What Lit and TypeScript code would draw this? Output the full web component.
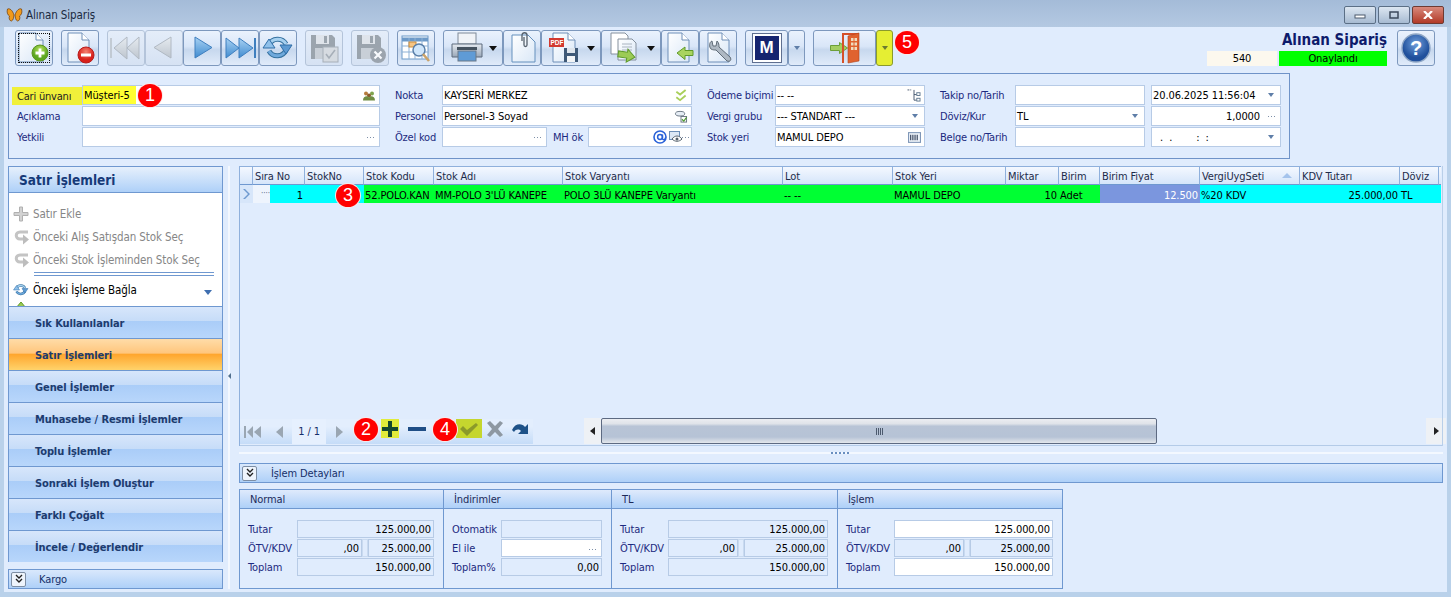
import { LitElement, css, html, svg } from 'lit'
import { customElement } from 'lit/decorators.js'

const page = (x = 1, w = 24) => svg`<path d="M${x} 1h${w - 7}l7 7v22h-${w}z" fill="url(#paper)" stroke="#6f8fb8"/><path d="M${x + w - 7} 1v7h7" fill="#fff" stroke="#6f8fb8"/>`
const floppy = (c1: string, c2: string) => svg`<path d="M3 3h21l3 3v21h-24z" fill="${c1}"/><rect x="8" y="3" width="13" height="9" fill="#dfe3e8"/><rect x="16" y="4" width="3" height="7" fill="${c1}"/><rect x="7" y="16" width="15" height="11" fill="${c2}"/>`
const ring = svg`
  <path d="M7 13A9.500 9.500 0 0 1 24 12" fill="none" stroke="#35719f" stroke-width="5"/><path d="M7 13A9.500 9.500 0 0 1 24 12" fill="none" stroke="#a6d0ef" stroke-width="3"/>
  <path d="M24 18A9.500 9.500 0 0 1 7 19" fill="none" stroke="#35719f" stroke-width="5"/><path d="M24 18A9.500 9.500 0 0 1 7 19" fill="none" stroke="#6fa9dc" stroke-width="3"/>
  <path d="M1 16h12l-6-9z" fill="#8fc0ea" stroke="#2f6ea8"/><path d="M18 13h12l-6 9z" fill="#5d9ad2" stroke="#2f6ea8"/>`
const hook = svg`<path d="M15 3H7C2 3 2 10 7 10h3" fill="none" stroke="#c4c4c4" stroke-width="3"/><path d="M10 5.500l6 5-6 5z" fill="#bdbdbd"/>`

const icons: Record<string, unknown> = {
  add: svg`${page()}<circle cx="22" cy="21" r="8" fill="url(#greenball)" stroke="#5c9420"/><path d="M17.500 21h9M22 16.500v9" stroke="#fff" stroke-width="2.800"/>`,
  del: svg`${page(4, 21)}<circle cx="22" cy="23" r="8" fill="url(#redball)" stroke="#b71c1c"/><rect x="17" y="21.500" width="10" height="3" fill="#fff"/>`,
  first: svg`<path d="M1 6v20" stroke="#bcc4cc" stroke-width="2"/><path d="M17 5v22l-13-11zM29 5v22l-12-11z" fill="url(#grey)" stroke="#a6aeb7"/>`,
  prev: svg`<path d="M23 5v21l-17-10.500z" fill="url(#grey)" stroke="#a6aeb7"/>`,
  next: svg`<path d="M9 5v21l17-10.500z" fill="url(#blue)" stroke="#3f7fbf"/>`,
  last: svg`<path d="M2 6v20l13-10zM15 6v20l14-10z" fill="url(#blue)" stroke="#3f7fbf"/><path d="M31 6v20" stroke="#3f7fbf" stroke-width="2"/>`,
  refresh: ring,
  saveok: svg`${floppy('#8b949c', '#c4cad0')}<rect x="15" y="15" width="15" height="15" fill="#d5d9dd" stroke="#9aa2aa"/><path d="M18 22l3 4 6-8" fill="none" stroke="#9aa2aa" stroke-width="1.600"/>`,
  savex: svg`${floppy('#8b949c', '#c4cad0')}<circle cx="24" cy="23" r="8" fill="#8d959d"/><path d="M20.500 19.500l7 7M27.500 19.500l-7 7" stroke="#fff" stroke-width="2.200"/>`,
  table: svg`<rect x="2" y="4" width="26" height="23" fill="#fff" stroke="#6d9ac8"/><path d="M2 7.500h26" stroke="#6d9ac8" stroke-width="4"/><path d="M2 14h26M2 20h26M9 6v21M15 6v21M22 6v21" stroke="#8db1d6"/><rect x="9" y="10" width="7" height="5" fill="#f6c583" stroke="#c98b3b"/><circle cx="19" cy="18" r="6" fill="#cfe6fb" stroke="#5a7fa8" stroke-width="1.500"/><path d="M23 22l6 7" stroke="#caa36a" stroke-width="2.600"/>`,
  print: svg`<rect x="8" y="1" width="18" height="11" fill="#f0f3f7" stroke="#7e8a98"/><path d="M2 12h30v13h-30z" fill="url(#printer)" stroke="#5c6a7c"/><rect x="7" y="15" width="20" height="3" fill="#45525f"/><rect x="8" y="19" width="18" height="10" fill="#5f9bd6" stroke="#6b7888"/>`,
  clip: svg`<path d="M6 3h16l7 7v20h-23z" fill="url(#paper)" stroke="#6590bd"/><path d="M16 9v-6c0-3 5-3 5 0v10c0 2-3 2-3 0v-8" fill="none" stroke="#55606c" stroke-width="1.300"/>`,
  pdf: svg`${page(5, 22)}<rect x="1" y="6" width="15" height="9" fill="#d2392f"/><text x="2.500" y="13" font-size="6.500" font-weight="700" fill="#fff" font-family="Liberation Sans">PDF</text><path d="M16 16h14v14h-14z" fill="#3e5876"/><rect x="19" y="16" width="8" height="5" fill="#dfe5ec"/><rect x="19" y="24" width="8" height="6" fill="#f2f4f6"/>`,
  copy: svg`<path d="M3 1h14l3 3v18h-17z" fill="#fff" stroke="#85909d"/><path d="M10 7h14l4 4v17h-18z" fill="url(#paper)" stroke="#85909d"/><path d="M14 12h10M14 15h10M14 18h10" stroke="#aab4c0"/><path d="M27 24l-8-7v3h-9v6h9v4z" transform="rotate(8 18 24)" fill="#9ccb55" stroke="#5f9a2a"/>`,
  back: svg`${page(4, 21)}<path d="M13 21l8-6v3.500h8v5h-8v4z" fill="#a9d45f" stroke="#5f9a2a"/>`,
  tool: svg`${page(6, 21)}<path d="M10 9c-3 1-3 6-1 8 2 1 3 1 5 1l11 11c3 1 5-1 3-4l-11-10c0-2 0-4-2-6l-1 5h-3z" fill="#aeb8c3" stroke="#606c78"/>`,
  exit: svg`<path d="M4.500 13.500h9v-3l8 5.500-8 5.500v-3h-9z" fill="#a3ce62" stroke="#6c9f3a"/><path d="M16 1h17v2h-15v28h-2z" fill="#d5512a"/><path d="M22 4l11-3v28l-11 2z" fill="#e0622f" stroke="#b2431b" stroke-width=".6"/><path d="M25 6h2.500v3h-2.500zM28.500 6h2.500v3h-2.500zM25 10.500h2.500v3h-2.500zM28.500 10.500h2.500v3h-2.500zM25 15h2.500v3h-2.500zM28.500 15h2.500v3h-2.500z" fill="#f0dcc0"/>`,
  help: svg`<circle cx="15" cy="15" r="14" fill="url(#helpball)" stroke="#8fa7c6" stroke-width="1.400"/><text x="15" y="22" text-anchor="middle" font-size="20" font-weight="700" fill="#fff" font-family="Liberation Sans">?</text>`,
}

const COLS = [
  ['', 13], ['Sıra No', 52], ['StokNo', 59], ['Stok Kodu', 70], ['Stok Adı', 129], ['Stok Varyantı', 220], ['Lot', 110],
  ['Stok Yeri', 113], ['Miktar', 53], ['Birim', 41], ['Birim Fiyat', 100], ['VergiUygSeti', 100], ['KDV Tutarı', 100], ['Döviz', 39],
] as const

const NAV = ['Sık Kullanılanlar', 'Satır İşlemleri', 'Genel İşlemler', 'Muhasebe / Resmi İşlemler', 'Toplu İşlemler', 'Sonraki İşlem Oluştur', 'Farklı Çoğalt', 'İncele / Değerlendir']

@customElement('app-root')
export class AppRoot extends LitElement {
  private tool(name: string, cls = '') {
    return html`<button class="tb ${cls}"><svg class="ic" viewBox="0 0 32 32">${icons[name]}</svg></button>`
  }

  private toolMenu(name: string) {
    return html`<button class="tb menu w60"><svg class="ic" viewBox="0 0 32 32">${icons[name]}</svg><i class="blk"></i></button>`
  }

  private money(a: string, b: string, c: string, white = false) {
    return html`
      <div class="sum-row"><span>Tutar</span><b class="val ${white ? 'on' : ''}">${a}</b></div>
      <div class="sum-row"><span>ÖTV/KDV</span><div class="split"><b class="val">,00</b><i class="stub"></i><b class="val">${b}</b></div></div>
      <div class="sum-row"><span>Toplam</span><b class="val ${white ? 'on' : ''}">${c}</b></div>
    `
  }

  render() {
    return html`
      <svg class="defs" width="0" height="0"><defs>
        <linearGradient id="paper" x1="0" y1="0" x2="1" y2="1"><stop offset="0" stop-color="#fff"/><stop offset="1" stop-color="#d9e7f7"/></linearGradient>
        <linearGradient id="blue" x1="0" y1="0" x2="0" y2="1"><stop offset="0" stop-color="#a9d2f3"/><stop offset="1" stop-color="#3f8bd0"/></linearGradient>
        <linearGradient id="grey" x1="0" y1="0" x2="0" y2="1"><stop offset="0" stop-color="#e8ecef"/><stop offset="1" stop-color="#b7bec6"/></linearGradient>
        <linearGradient id="printer" x1="0" y1="0" x2="0" y2="1"><stop offset="0" stop-color="#e6ebf1"/><stop offset="1" stop-color="#98a6b7"/></linearGradient>
        <radialGradient id="greenball" cy=".3"><stop offset="0" stop-color="#b7e35f"/><stop offset="1" stop-color="#5ca621"/></radialGradient>
        <radialGradient id="redball" cy=".3"><stop offset="0" stop-color="#f5806f"/><stop offset="1" stop-color="#d81f1a"/></radialGradient>
        <radialGradient id="helpball" cy=".35"><stop offset="0" stop-color="#6f9fdc"/><stop offset="1" stop-color="#20509c"/></radialGradient>
      </defs></svg>

      <div class="title">
        <svg class="fly" viewBox="0 0 16 16"><path d="M7.500 8C6 3 3 1 1 2c-1 3 0 6 2 7-1 2 0 5 2 5 2-1 2-3 2.500-6zM8.500 8c1.500-5 4.500-7 6.500-6 1 3 0 6-2 7 1 2 0 5-2 5-2-1-2-3-2.500-6z" fill="#f09a1c" stroke="#6b3a08" stroke-width=".7"/></svg>
        <span>Alınan Sipariş</span>
        <div class="win-btns">
          <button class="wb"><svg viewBox="0 0 12 8"><rect x="1" y="4" width="10" height="3" fill="#fff" stroke="#4c5a6c"/></svg></button>
          <button class="wb"><svg viewBox="0 0 12 8"><rect x="2" y="1" width="8" height="6" fill="none" stroke="#3c4a5c" stroke-width="1.500"/></svg></button>
          <button class="wb close"><svg viewBox="0 0 12 8"><path d="M2 0l8 8M10 0l-8 8" stroke="#fff" stroke-width="2.200"/></svg></button>
        </div>
      </div>

      <div class="body">
        <div class="toolbar">
          <div class="tools">
            <button class="tb focus"><svg class="ic" viewBox="0 0 32 32">${icons.add}</svg></button>
            ${this.tool('del', 'g8')}
            <div class="joined g8">
              ${this.tool('first', 'off')}${this.tool('prev', 'off')}${this.tool('next')}${this.tool('last')}${this.tool('refresh')}
            </div>
            ${this.tool('saveok', 'g8 off')}${this.tool('savex', 'g8 off')}${this.tool('table', 'g8')}
            <div class="joined g8">
              ${this.toolMenu('print')}${this.tool('clip')}${this.toolMenu('pdf')}${this.toolMenu('copy')}${this.tool('back')}${this.tool('tool')}
            </div>
            <div class="joined g8">
              <button class="tb w43"><span class="mlogo"><b>M</b></span></button>
              <button class="tb w17"><i class="tri"></i></button>
            </div>
            <div class="joined g8">
              <button class="tb w63"><svg class="ic exit" viewBox="0 0 38 32">${icons.exit}</svg></button>
              <button class="tb w17 yellow"><i class="tri dark"></i></button>
            </div>
          </div>
          <div class="doc">
            <div class="doc-title">Alınan Sipariş</div>
            <div class="doc-state"><span class="seq">540</span><span class="ok">Onaylandı</span></div>
          </div>
          <button class="tb help"><svg viewBox="0 0 30 30">${icons.help}</svg></button>
        </div>

        <div class="form">
          <label class="first mark">Cari ünvanı</label>
          <div class="in"><span class="hl">Müşteri-5</span>
            <svg class="gl" viewBox="0 0 14 12"><circle cx="4" cy="4" r="2" fill="#b67a3c"/><circle cx="10" cy="4" r="2" fill="#7fa34d"/><circle cx="7" cy="6" r="2" fill="#8a5a2c"/><path d="M1 11c0-5 5-5 6-3 1-2 6-2 6 3z" fill="#6f8c42"/></svg>
          </div>
          <label>Nokta</label>
          <div class="in">KAYSERİ MERKEZ
            <svg class="gl" viewBox="0 0 14 14"><path d="M2 3l4 3 6-5M2 9l4 3 6-5" fill="none" stroke="#a9cf5a" stroke-width="2"/></svg>
          </div>
          <label>Ödeme biçimi</label>
          <div class="in">-- --
            <svg class="gl" viewBox="0 0 14 14"><path d="M0 1h2M3 1h1M7 1v11h3M7 6h3" fill="none" stroke="#44556c"/><rect x="10" y="4" width="3.500" height="3" fill="#fff" stroke="#607890"/><rect x="10" y="10" width="3.500" height="3" fill="#fff" stroke="#607890"/></svg>
          </div>
          <label>Takip no/Tarih</label>
          <div class="in"></div>
          <div class="in last">20.06.2025 11:56:04<i class="tri"></i></div>

          <label class="first">Açıklama</label>
          <div class="in"></div>
          <label>Personel</label>
          <div class="in">Personel-3 Soyad
            <svg class="gl" viewBox="0 0 14 14"><ellipse cx="6" cy="4" rx="5" ry="2.500" fill="#e6edf5" stroke="#66717e"/><rect x="7" y="7" width="6" height="6" fill="#fff" stroke="#66717e"/><path d="M8 10l2 2 3-4" fill="none" stroke="#4e9a30" stroke-width="1.300"/></svg>
          </div>
          <label>Vergi grubu</label>
          <div class="in">--- STANDART ---<i class="tri"></i></div>
          <label>Döviz/Kur</label>
          <div class="in">TL<i class="tri"></i></div>
          <div class="in last rt">1,0000<i class="dots"></i></div>

          <label class="first">Yetkili</label>
          <div class="in"><i class="dots"></i></div>
          <label>Özel kod</label>
          <div class="pair">
            <div class="in"><i class="dots"></i></div>
            <label>MH ök</label>
            <div class="in mh">
              <svg class="at" viewBox="0 0 14 14"><circle cx="7" cy="7" r="6" fill="none" stroke="#2a62d8" stroke-width="1.600"/><circle cx="7" cy="7" r="2.400" fill="none" stroke="#2a62d8" stroke-width="1.500"/><path d="M9.500 4.500v4c0 2 3 1.500 3-1" fill="none" stroke="#2a62d8" stroke-width="1.400"/></svg>
              <svg class="eye" viewBox="0 0 14 12"><rect x=".5" y=".5" width="10" height="8" fill="#dce8f6" stroke="#6c8fb8"/><path d="M3 8c3-4 7-4 10 0-3 3-7 3-10 0z" fill="#fff" stroke="#54606c"/><circle cx="8" cy="8" r="1.500" fill="#54606c"/></svg>
              <i class="dots"></i>
            </div>
          </div>
          <label>Stok yeri</label>
          <div class="in">MAMUL DEPO
            <svg class="gl bar" viewBox="0 0 12 10"><rect x=".5" y=".5" width="11" height="9" fill="#eef3fa" stroke="#7f97b8"/><path d="M2.500 2.500v5M4.500 2.500v5M6.500 2.500v5M8.500 2.500v5" stroke="#2b3a52"/></svg>
          </div>
          <label>Belge no/Tarih</label>
          <div class="in"></div>
          <div class="in last dt"><span>. &nbsp;.</span><span class="tm">: &nbsp;:</span><i class="tri"></i></div>
        </div>

        <div class="main">
          <aside class="side">
            <div class="bar-head">Satır İşlemleri</div>
            <div class="links">
              <div class="lnk off"><svg viewBox="0 0 16 16"><path d="M6.500 1h3v5.500h5.500v3h-5.500v5.500h-3v-5.500h-5.500v-3h5.500z" fill="#d2d2d2" stroke="#b0b0b0"/></svg>Satır Ekle</div>
              <div class="lnk off"><svg viewBox="0 0 16 16">${hook}</svg>Önceki Alış Satışdan Stok Seç</div>
              <div class="lnk off"><svg viewBox="0 0 16 16">${hook}</svg>Önceki Stok İşleminden Stok Seç</div>
              <div class="sep"></div>
              <div class="lnk"><svg viewBox="0 0 32 32">${ring}</svg>Önceki İşleme Bağla<i class="tri more"></i></div>
              <div class="lnk cut"><svg viewBox="0 0 16 16"><path d="M8 1l5 6h-3v6h-4v-6h-3z" fill="#9ccb55" stroke="#5f9a2a"/></svg></div>
            </div>
            ${NAV.map(n => html`<div class="nav ${n === 'Satır İşlemleri' ? 'cur' : ''}">${n}</div>`)}
            <div class="strip kargo"><i class="chev"><svg viewBox="0 0 10 10"><path d="M2 1l3 3 3-3M2 5l3 3 3-3" fill="none" stroke="#222" stroke-width="1.400"/></svg></i><span>Kargo</span></div>
          </aside>

          <div class="vsplit"><i></i></div>

          <section class="pane">
            <div class="grid">
              <div class="cols">
                ${COLS.map(([t], i) => html`<div class="th">${t}${i === 11 ? html`<i class="sort"></i>` : ''}</div>`)}
                <div class="th end"></div>
              </div>
              <div class="cols row">
                <div class="ind"><svg viewBox="0 0 8 10"><path d="M1 0l5 5-5 5h2l5-5-5-5z" fill="#6f9ad0"/></svg></div>
                <div class="td cy num"><em>····</em><span>1</span></div>
                <div class="td cy"></div>
                <div class="td gr">52.POLO.KAN</div>
                <div class="td gr">MM-POLO 3'LÜ KANEPE</div>
                <div class="td gr">POLO 3LÜ KANEPE Varyantı</div>
                <div class="td gr">-- --</div>
                <div class="td gr">MAMUL DEPO</div>
                <div class="td gr r">10</div>
                <div class="td gr">Adet</div>
                <div class="td pr r">12.500</div>
                <div class="td cy">%20 KDV</div>
                <div class="td cy r">25.000,00</div>
                <div class="td cy">TL</div>
                <div class="td cy"></div>
              </div>
              <div class="grow"></div>
              <div class="grid-foot">
                <div class="pager">
                  <svg class="p1" viewBox="0 0 20 14"><path d="M1 1h2v12h-2zM10 1v12l-6-6zM18 1v12l-7-6z" fill="#9aa6b2"/></svg>
                  <svg class="p2" viewBox="0 0 9 14"><path d="M8 1v12l-7-6z" fill="#9aa6b2"/></svg>
                  <span class="pg">1 / 1</span>
                  <svg class="p3" viewBox="0 0 9 14"><path d="M1 1v12l7-6z" fill="#9aa6b2"/></svg>
                  <span class="op plus"><svg viewBox="0 0 16 16"><path d="M6 0h4v6h6v4h-6v6h-4v-6h-6v-4h6z" fill="#14482e"/></svg></span>
                  <span class="op minus"><svg viewBox="0 0 18 16"><rect y="6" width="18" height="4" fill="#1f4e86"/></svg></span>
                  <span class="op check"><svg viewBox="0 0 20 16"><path d="M1 8l3-3 4 4 9-7 2 2-11 11z" fill="#8b9a2a"/></svg></span>
                  <span class="op cross"><svg viewBox="0 0 18 16"><path d="M1 2l3-2 5 5 5-5 3 2-5 6 5 6-3 2-5-5-5 5-3-2 5-6z" fill="#8e98a2"/></svg></span>
                  <span class="op redo"><svg viewBox="0 0 20 16"><path d="M1 9c3-7 10-7 13-3l3-3v10h-10l3-3c-2-2-5-2-7 1z" fill="#1e5288"/></svg></span>
                </div>
                <div class="hscroll">
                  <span class="sb"><i class="la"></i></span>
                  <span class="thumb"><i></i></span>
                  <span class="sb end"><i class="ra"></i></span>
                </div>
              </div>
            </div>
            <div class="hsplit"><i></i></div>
            <div class="strip det"><i class="chev"><svg viewBox="0 0 10 10"><path d="M2 1l3 3 3-3M2 5l3 3 3-3" fill="none" stroke="#222" stroke-width="1.400"/></svg></i><span>İşlem Detayları</span></div>
            <div class="sums">
              <div class="sum s1"><h4>Normal</h4><div class="sum-b">${this.money('125.000,00', '25.000,00', '150.000,00')}</div></div>
              <div class="sum s2"><h4>İndirimler</h4><div class="sum-b">
                <div class="sum-row"><span>Otomatik</span><b class="val"></b></div>
                <div class="sum-row"><span>El ile</span><b class="val on"><i class="dots"></i></b></div>
                <div class="sum-row"><span>Toplam%</span><b class="val">0,00</b></div>
              </div></div>
              <div class="sum s3"><h4>TL</h4><div class="sum-b">${this.money('125.000,00', '25.000,00', '150.000,00')}</div></div>
              <div class="sum s4"><h4>İşlem</h4><div class="sum-b">${this.money('125.000,00', '25.000,00', '150.000,00', true)}</div></div>
            </div>
          </section>
        </div>
      </div>

      <span class="pin p-a">1</span>
      <span class="pin p-b">2</span>
      <span class="pin p-c">3</span>
      <span class="pin p-d">4</span>
      <span class="pin p-e">5</span>
    `
  }

  static styles = css`
    :host {
      display: block;
      position: relative;
      width: 1451px;
      height: 597px;
      overflow: hidden;
      background: #b9d1ea;
      font-family: "DejaVu Sans Condensed", "DejaVu Sans", sans-serif;
      font-stretch: condensed;
      font-size: 11px;
      letter-spacing: -0.1px;
      color: #000;
    }
    .defs { display: block; height: 0; }
    button { margin: 0; padding: 0; font: inherit; }
    i, em, b { font-style: normal; font-weight: normal; }

    .title {
      height: 27px;
      display: flex;
      align-items: center;
      gap: 3px;
      padding: 3px 0 0 6px;
      background: linear-gradient(#a4bbd8, #b4c9e2);
      font-size: 11.500px;
      color: #1a2a40;
      box-sizing: border-box;
    }
    .fly { width: 17px; height: 16px; }
    .win-btns { margin-left: auto; margin-right: 7px; display: flex; gap: 2px; }
    .wb {
      width: 32px;
      height: 18px;
      display: flex;
      align-items: center;
      justify-content: center;
      border: 1px solid #5b6f86;
      border-radius: 2px;
      background: linear-gradient(#dce6f1, #a7bbd2);
    }
    .wb svg { width: 12px; height: 8px; }
    .wb.close { background: linear-gradient(#d8897c, #b23a28); border-color: #6e3a32; }

    .body {
      position: relative;
      height: 565px;
      margin: 0 4px;
      padding: 3px 0 0 4px;
      box-sizing: border-box;
      background: #e0ecfd;
    }

    .toolbar { display: flex; height: 36px; padding-left: 7px; }
    .tools { display: flex; }
    .joined { display: flex; }
    .g8 { margin-left: 8px; }
    .tb {
      width: 38px;
      height: 36px;
      flex: none;
      display: flex;
      align-items: center;
      justify-content: center;
      position: relative;
      border: 1px solid #7d98bd;
      border-radius: 3px;
      background: linear-gradient(#eaf2fd 0%, #d9e6f8 45%, #c7d8ee 55%, #e0ebfa 100%);
      box-sizing: border-box;
    }
    .tb.off { background: linear-gradient(#e4edf9, #d6e2f3); border-color: #b4c4da; }
    .tb.off .ic { opacity: .8; }
    .tb.focus::after { content: ""; position: absolute; inset: 2px; border: 1px dotted #111; }
    .ic { width: 32px; height: 32px; flex: none; overflow: visible; }
    .tb.menu { justify-content: flex-start; padding-left: 6px; }
    .w60 { width: 60px; }
    .w43 { width: 43px; }
    .w17 { width: 17px; }
    .w63 { width: 63px; }
    .ic.exit { width: 38px; height: 32px; }
    .yellow { background: #e5ee33; border-color: #8a9a2c; }
    .blk { position: absolute; right: 5px; top: 15px; border: 4px solid transparent; border-top: 5px solid #111; border-bottom: 0; }
    .tri { display: block; border: 3.500px solid transparent; border-top: 4px solid #5f7ea8; border-bottom: 0; }
    .tri.dark { border-top-color: #6b7a30; }
    .mlogo { width: 30px; height: 30px; box-sizing: border-box; border: 1px solid #5f6f90; padding: 2px; background: #fff; display: block; }
    .mlogo b {
      display: flex;
      align-items: center;
      justify-content: center;
      height: 100%;
      background: #16246f;
      color: #fff;
      font: 700 17px "Liberation Sans", sans-serif;
    }
    .doc { margin-left: auto; width: 180px; display: flex; flex-direction: column; }
    .doc-title { height: 21px; text-align: right; font-size: 15px; font-weight: 700; color: #0e1b6b; line-height: 21px; letter-spacing: 0; }
    .doc-state { display: flex; height: 15px; gap: 2px; line-height: 15px; text-align: center; }
    .seq { width: 70px; background: #fcf8ee; }
    .ok { width: 108px; background: #00ff00; }
    .tb.help { margin-left: 10px; margin-right: 12px; }
    .tb.help svg { width: 30px; height: 30px; }

    .form {
      width: 1282px;
      height: 86px;
      margin-top: 7px;
      box-sizing: border-box;
      border: 1px solid #6f93c8;
      padding-top: 11px;
      display: grid;
      grid-template-columns: 73px 298px 62px 250px 83px 150px 90px 130px 136px;
      grid-template-rows: repeat(3, 20px);
      row-gap: 1px;
      align-items: stretch;
    }
    .form label { display: flex; align-items: center; padding-left: 15px; color: #1c2a80; white-space: nowrap; letter-spacing: -0.2px; }
    .form label.first { padding-left: 8px; }
    .form label.mark { margin: 2px 0 0 3px; padding-left: 5px; background: #f0f03a; color: #222; }
    .in {
      display: flex;
      align-items: center;
      position: relative;
      min-width: 0;
      padding-left: 1px;
      border: 1px solid #b7cbe6;
      background: #fff;
      box-sizing: border-box;
      white-space: nowrap;
    }
    .in.last { margin-left: 6px; }
    .in.rt { justify-content: flex-end; padding-right: 20px; }
    .in .tri { position: absolute; right: 6px; top: 7px; }
    .gl { position: absolute; right: 3px; top: 3px; width: 14px; height: 13px; }
    .gl.bar { width: 13px; height: 11px; top: 4px; }
    .hl { background: #ffff33; align-self: stretch; display: flex; align-items: center; width: 52px; margin-left: -1px; padding-left: 1px; }
    .dots { position: absolute; right: 3px; top: 9px; width: 9px; height: 1px; background: repeating-linear-gradient(90deg, #7d8fa8 0 1px, transparent 1px 3px); }
    .pair { display: flex; }
    .pair .in { width: 105px; }
    .pair .in.mh { width: 104px; }
    .pair label { width: 41px; padding-left: 6px; box-sizing: border-box; }
    .at { position: absolute; right: 24px; top: 2px; width: 14px; height: 14px; }
    .eye { position: absolute; right: 8px; top: 3px; width: 14px; height: 12px; }
    .mh .dots { right: 2px; width: 7px; }
    .dt .tm { margin-left: 24px; }
    .dt span:first-child { margin-left: 7px; }

    .main { display: flex; margin-top: 7px; }
    .side { width: 215px; flex: none; }
    .bar-head {
      height: 27px;
      box-sizing: border-box;
      padding-left: 10px;
      border: 1px solid #6f98d0;
      background: linear-gradient(#e6f0fc, #aed0f8);
      color: #163a78;
      font-size: 13.500px;
      font-weight: 700;
      line-height: 26px;
      letter-spacing: 0;
    }
    .links {
      height: 113px;
      overflow: hidden;
      box-sizing: border-box;
      background: #fff;
      border: 1px solid #6f98d0;
      border-width: 0 1px;
      padding-top: 9px;
      position: relative;
    }
    .lnk { height: 23px; display: flex; align-items: center; gap: 4px; padding-left: 4px; font-size: 11.500px; white-space: nowrap; }
    .lnk svg { width: 16px; height: 16px; flex: none; }
    .lnk.off { color: #868686; }
    .sep { margin: 1px 8px 2px 25px; height: 2px; border: 1px solid #6f98d0; border-width: 1px 0; }
    .tri.more { position: absolute; right: 10px; top: 97px; border-width: 5px 4px 0; border-top-color: #3f6fb0; }
    .cut { height: 10px; align-items: flex-start; }
    .nav {
      height: 32px;
      box-sizing: border-box;
      padding: 1px 0 0 26px;
      border: 1px solid #6f98d0;
      border-bottom: 0;
      background: linear-gradient(#d7e6fb 0, #c6dcf8 45%, #aacdf8 46%, #b8d6fb 100%);
      color: #1d3b6e;
      font-weight: 700;
      line-height: 31px;
      font-size: 11px;
    }
    .nav.cur { background: linear-gradient(#ffdca8 0, #ffc67d 45%, #ffa62e 50%, #ffd36b 100%); }
    .nav:last-of-type { border-bottom: 1px solid #6f98d0; }
    .strip {
      height: 20px;
      display: flex;
      align-items: center;
      box-sizing: border-box;
      border: 1px solid #6f98d0;
      background: linear-gradient(#d9e8fc, #aed0f8);
      color: #16306a;
    }
    .kargo { margin-top: 7px; }
    .kargo span { margin-left: 13px; }
    .det span { margin-left: 14px; }
    .chev {
      width: 15px;
      height: 15px;
      margin-left: 2px;
      box-sizing: border-box;
      border: 1px solid #7d8ea4;
      border-radius: 2px;
      background: #eef4fc;
      display: flex;
      align-items: center;
      justify-content: center;
    }
    .chev svg { width: 10px; height: 10px; }

    .vsplit { width: 16px; flex: none; position: relative; }
    .vsplit::before { content: ""; position: absolute; left: 5px; top: 0; bottom: 0; width: 2px; background: #f3f8ff; }
    .vsplit i { position: absolute; left: 5px; top: 207px; border: 3px solid transparent; border-right: 3px solid #51708f; border-left: 0; }

    .pane { width: 1204px; flex: none; }
    .grid { height: 280px; display: flex; flex-direction: column; border-left: 1px solid #8fb0dc; box-sizing: border-box; position: relative; }
    .grid::after { content: ""; position: absolute; left: 1202px; top: 0; bottom: 0; width: 1px; background: #b9cfe9; }
    .cols { display: grid; grid-template-columns: 13px 52px 59px 70px 129px 220px 110px 113px 53px 41px 100px 100px 100px 39px 2px; }
    .th {
      height: 19px;
      position: relative;
      box-sizing: border-box;
      border-top: 1px solid #8fb0dc;
      border-right: 1px solid #8fb0dc;
      border-bottom: 1px solid #6f98d0;
      padding-left: 2px;
      background: linear-gradient(#f4f8ff, #d5e5fa);
      line-height: 20px;
      color: #1d2b4a;
      white-space: nowrap;
    }
    .sort { position: absolute; right: 7px; top: 6px; border: 5px solid transparent; border-bottom: 5px solid #a4c3ec; border-top: 0; }
    .th.end { border-right: 0; padding: 0; }
    .row { height: 18px; line-height: 21px; }
    .ind { background: #d7e6fa; display: flex; align-items: center; padding-left: 2px; }
    .ind svg { width: 8px; height: 10px; }
    .td { height: 18px; white-space: nowrap; overflow: hidden; padding-left: 1px; }
    .td.r { text-align: right; padding: 0 2px 0 0; }
    .cy { background: #00ffff; }
    .gr { background: #00ff33; }
    .pr { background: #7b96de; color: #fff; }
    .td.num { display: flex; padding: 0; background: linear-gradient(90deg, #eef4fd 17px, #00ffff 17px); }
    .num em { width: 17px; padding-left: 8px; box-sizing: border-box; color: #5a6d86; font-size: 8px; line-height: 17px; letter-spacing: 0; overflow: hidden; }
    .num span { margin-left: auto; margin-right: 2px; }
    .grow { flex: 1; }
    .grid-foot { display: flex; height: 26px; align-items: flex-start; border-bottom: 1px solid #b4cbe8; }
    .pager {
      width: 293px;
      height: 25px;
      display: flex;
      align-items: center;
      position: relative;
      background: linear-gradient(#e3eefd 0, #e3eefd 30%, #c5dcf8 100%);
    }
    .pager svg { flex: none; }
    .p1 { width: 20px; height: 14px; margin-left: 3px; }
    .p2 { width: 9px; height: 14px; margin-left: 12px; }
    .pg { width: 34px; margin-left: 8px; height: 25px; line-height: 26px; text-align: center; background: #e6f0fe; color: #16306a; }
    .p3 { width: 9px; height: 14px; margin-left: 9px; }
    .op { position: absolute; top: 0; height: 19px; display: flex; align-items: center; justify-content: center; }
    .op svg { height: 16px; }
    .plus { left: 141px; width: 18px; background: #e1ec3a; }
    .minus { left: 168px; width: 18px; }
    .check { left: 216px; width: 26px; background: #c5d62e; }
    .cross { left: 245px; width: 20px; }
    .redo { left: 271px; width: 19px; }
    .hscroll { margin: -1px -3px 0 51px; flex: 1; height: 26px; display: flex; width: 859px; }
    .sb { width: 17px; height: 26px; display: flex; align-items: center; justify-content: center; background: #eef1f5; }
    .sb.end { width: 20px; margin-left: auto; }
    .la { border: 4px solid transparent; border-right: 5px solid #222; border-left: 0; }
    .ra { border: 4px solid transparent; border-left: 5px solid #222; border-right: 0; }
    .thumb {
      width: 556px;
      height: 26px;
      box-sizing: border-box;
      border: 1px solid #5d6a82;
      border-radius: 2px;
      background: linear-gradient(#eceef2 0, #dfe3e9 20%, #b8c4d6 30%, #b6c3d6 75%, #e3e7ec 100%);
      display: flex;
      align-items: center;
      justify-content: center;
    }
    .thumb i { width: 7px; height: 7px; background: repeating-linear-gradient(90deg, #4c5a6e 0 1px, transparent 1px 2px); }
    .hsplit { height: 17px; position: relative; }
    .hsplit::before { content: ""; position: absolute; left: 0; right: 0; top: 6px; height: 2px; background: #f3f8ff; }
    .hsplit i { position: absolute; left: 592px; top: 6px; width: 18px; height: 2px; background: repeating-linear-gradient(90deg, #6a8fc0 0 2px, transparent 2px 4px); }
    .sums { display: flex; margin-top: 6px; height: 100px; }
    .sum { box-sizing: border-box; border: 1px solid #6f98d0; border-right: 0; }
    .sum:last-child { border-right: 1px solid #6f98d0; }
    .sum h4 {
      margin: 0;
      height: 19px;
      box-sizing: border-box;
      padding-left: 10px;
      border-bottom: 1px solid #6f98d0;
      background: linear-gradient(#dfeafc, #aed0f8);
      font-size: 11px;
      font-weight: normal;
      line-height: 19px;
      color: #1d2b5a;
    }
    .sum-b { padding: 11px 9px 0 8px; display: flex; flex-direction: column; gap: 1px; }
    .s1 { width: 204px; } .s2 { width: 168px; } .s3 { width: 226px; } .s4 { width: 226px; }
    .sum-row { display: flex; height: 18px; align-items: stretch; line-height: 18px; }
    .sum-row > span { width: 49px; flex: none; color: #1c2a80; line-height: 20px; white-space: nowrap; }
    .s3 .sum-row > span, .s4 .sum-row > span { width: 48px; }
    .val {
      flex: 1;
      position: relative;
      box-sizing: border-box;
      border: 1px solid #b7cbe6;
      padding-right: 2px;
      text-align: right;
      background: #e0ecfd;
    }
    .val.on { background: #fff; }
    .split { display: flex; flex: 1; }
    .split .val:first-child { flex: 0 0 65px; }
    .s3 .split .val:first-child, .s4 .split .val:first-child { flex: 0 0 70px; }
    .stub { width: 6px; flex: none; border: 1px solid #c9daf0; box-sizing: border-box; }

    .pin {
      position: absolute;
      width: 24px;
      height: 23px;
      border-radius: 50%;
      background: #f00;
      box-shadow: 0 0 0 1px #fbe9e9;
      color: #fff;
      font: 18px/23px "Liberation Sans", sans-serif;
      text-align: center;
    }
    .p-a { left: 138px; top: 84px; }
    .p-b { left: 354px; top: 418px; }
    .p-c { left: 336px; top: 184px; }
    .p-d { left: 433px; top: 418px; }
    .p-e { left: 895px; top: 31px; }
  `
}

declare global {
  interface HTMLElementTagNameMap {
    'app-root': AppRoot
  }
}
